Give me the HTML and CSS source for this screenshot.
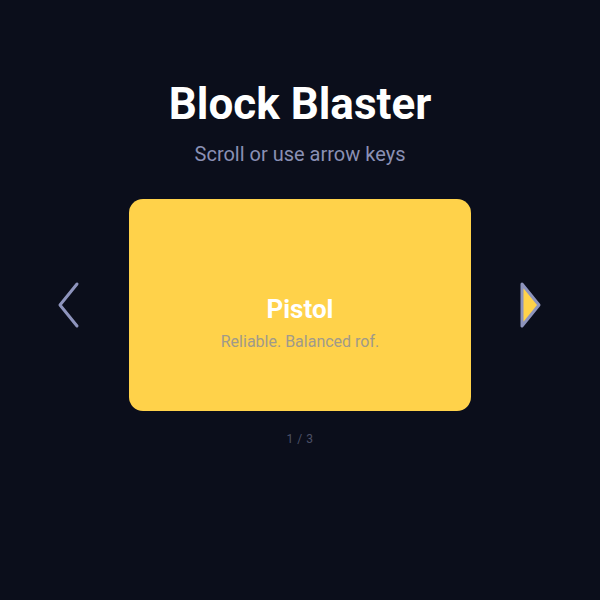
FILE: index.html
```html
<!DOCTYPE html>
<html>
<head>
<meta charset="utf-8">
<link rel="stylesheet" href="styles.css">
</head>
<body>
<main class="page">
  <h1 class="title">Block Blaster</h1>
  <p class="subtitle">Scroll or use arrow keys</p>
  <div class="carousel">
    <button class="arrow arrow-left" aria-label="Previous">
      <svg width="24" height="48" viewBox="0 0 24 48"><path d="M20 3 L3 24 L20 45" fill="none" stroke="#8e94bd" stroke-width="3" stroke-linecap="round" stroke-linejoin="round"/></svg>
    </button>
    <div class="card">
      <div class="card-name">Pistol</div>
      <div class="card-desc">Reliable. Balanced rof.</div>
    </div>
    <button class="arrow arrow-right" aria-label="Next">
      <svg width="24" height="48" viewBox="0 0 24 48"><path d="M3 3 L20 24 L3 45 Z" fill="#ffd24a" stroke="#8e94bd" stroke-width="3" stroke-linecap="round" stroke-linejoin="round"/></svg>
    </button>
  </div>
  <div class="pager">1 / 3</div>
</main>
</body>
</html>
```
FILE: styles.css
```css
html, body {
  margin: 0;
  padding: 0;
  background: #0b0e1b;
  height: 100%;
}
.page {
  display: flex;
  flex-direction: column;
  align-items: center;
  font-family: Roboto, "Liberation Sans", sans-serif;
  padding-top: 79px;
}
.title {
  margin: 0;
  font-size: 44px;
  font-weight: 700;
  color: #ffffff;
  line-height: 50px;
}
.subtitle {
  margin: 13px 0 0;
  font-size: 20px;
  color: #8a90b4;
  line-height: 24px;
}
.carousel {
  margin-top: 33px;
  display: flex;
  align-items: center;
  gap: 48px;
}
.arrow {
  background: none;
  border: 0;
  padding: 0;
  width: 24px;
  height: 48px;
  display: flex;
}
.card {
  box-sizing: border-box;
  width: 342px;
  height: 212px;
  padding-top: 36px;
  background: #ffd24a;
  border-radius: 14px;
  display: flex;
  flex-direction: column;
  align-items: center;
  justify-content: center;
}
.card-name {
  font-size: 26px;
  font-weight: 700;
  color: #ffffff;
  line-height: 30px;
}
.card-desc {
  margin-top: 8px;
  font-size: 16px;
  color: #a09a8a;
  line-height: 20px;
}
.pager {
  margin-top: 21px;
  font-size: 12px;
  color: #4c5168;
  letter-spacing: 0.5px;
}
```
